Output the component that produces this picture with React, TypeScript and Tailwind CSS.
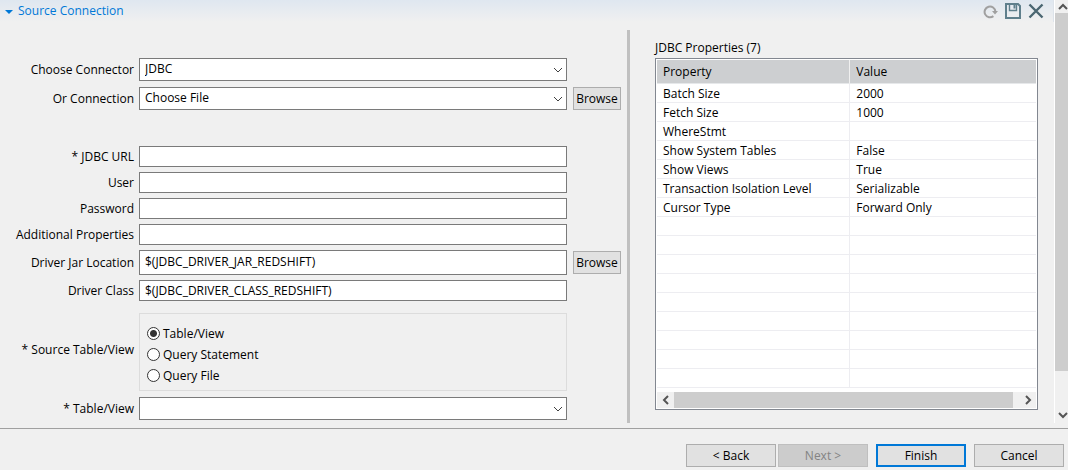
import { useId, useState } from 'react';
import type { ReactNode } from 'react';

const inputClass = 'block w-full border border-[#7a7a7a] bg-white px-[5px] outline-none';

function Chevron({ className, d }: { className: string; d: string }) {
  return (
    <svg className={className} viewBox="0 0 10 10" fill="none" stroke="currentColor" aria-hidden="true">
      <path d={d} />
    </svg>
  );
}

function Row({ label, htmlFor, action, children }: { label: string; htmlFor?: string; action?: ReactNode; children: ReactNode }) {
  return (
    <div className="grid grid-cols-[134px_minmax(0,1fr)_48px] items-center">
      <label htmlFor={htmlFor} className="text-right whitespace-nowrap">
        {label}
      </label>
      <div className="ml-[5px] mr-1.5">{children}</div>
      {action}
    </div>
  );
}

function TextField({ label, value = '', type = 'text', tall = false, action }: { label: string; value?: string; type?: string; tall?: boolean; action?: ReactNode }) {
  const id = useId();
  return (
    <Row label={label} htmlFor={id} action={action}>
      <input id={id} type={type} defaultValue={value} className={`${inputClass} ${tall ? 'h-[25px] pb-0.5' : 'h-[21px]'}`} />
    </Row>
  );
}

function SelectField({ label, options, action }: { label: string; options: string[]; action?: ReactNode }) {
  const id = useId();
  return (
    <Row label={label} htmlFor={id} action={action}>
      <div className="relative">
        <select id={id} className={`${inputClass} h-[23px] appearance-none pb-0.5`}>
          {options.map((o) => (
            <option key={o}>{o}</option>
          ))}
        </select>
        <Chevron className="pointer-events-none absolute top-[7px] right-1 size-[10px] text-[#404040]" d="M1 3L5 7L9 3" />
      </div>
    </Row>
  );
}

function Browse() {
  return (
    <button type="button" className="h-[23px] border border-[#adadad] bg-[#e1e1e1]">
      Browse
    </button>
  );
}

function SourceChoice() {
  const [choice, setChoice] = useState('Table/View');
  return (
    <div role="radiogroup" aria-labelledby="source-title" className="grid grid-cols-[134px_minmax(0,1fr)_48px] items-center">
      <span id="source-title" className="pb-1 text-right whitespace-nowrap">
        * Source Table/View
      </span>
      <div className="mr-1.5 ml-[5px] flex h-[78px] flex-col justify-end border border-[#dcdcdc] pb-1 pl-[7px]">
        {['Table/View', 'Query Statement', 'Query File'].map((name) => (
          <label key={name} className="flex h-[21px] items-center gap-[3px]">
            <input
              type="radio"
              name="source"
              checked={choice === name}
              onChange={() => setChoice(name)}
              className="size-[13px] appearance-none rounded-full border border-[#333] bg-white checked:bg-[radial-gradient(circle,#333_3px,#fff_4px)]"
            />
            {name}
          </label>
        ))}
      </div>
    </div>
  );
}

const properties: [string, string][] = [
  ['Batch Size', '2000'],
  ['Fetch Size', '1000'],
  ['WhereStmt', ''],
  ['Show System Tables', 'False'],
  ['Show Views', 'True'],
  ['Transaction Isolation Level', 'Serializable'],
  ['Cursor Type', 'Forward Only'],
];
const emptyRows: [string, string][] = Array.from({ length: 9 }, () => ['', '']);

function PropertiesTable() {
  return (
    <div className="border border-[#828790] bg-white p-px">
      <table aria-labelledby="properties-title" className="w-full table-fixed border-separate border-spacing-0 text-left">
        <thead>
          <tr className="h-6 bg-[#cdcfd1]">
            <th className="w-[51%] border-r border-b border-r-[#f0f0f0] border-b-[#e6e8ea] p-0 pl-1.5 font-normal">Property</th>
            <th className="border-b border-[#e6e8ea] p-0 pl-1.5 font-normal">Value</th>
          </tr>
        </thead>
        <tbody>
          {[...properties, ...emptyRows].map(([name, value], i) => (
            <tr key={i} className="h-[19px]">
              <td className="border-r border-b border-[#ededf1] p-0 pt-0.5 pl-1.5">{name}</td>
              <td className="border-b border-[#ededf1] p-0 pt-0.5 pl-1.5">{value}</td>
            </tr>
          ))}
        </tbody>
      </table>
      <div className="mt-1 flex h-4 items-stretch bg-[#f0f0f0] text-[#555]">
        <button type="button" aria-label="Scroll left" className="flex w-[17px] items-center justify-center">
          <Chevron className="size-[10px] stroke-2" d="M7 1L3 5L7 9" />
        </button>
        <div className="mr-1.5 flex-1 bg-[#cdcdcd]" />
        <button type="button" aria-label="Scroll right" className="flex w-[17px] items-center justify-center">
          <Chevron className="size-[10px] stroke-2" d="M3 1L7 5L3 9" />
        </button>
      </div>
    </div>
  );
}

function Header() {
  return (
    <header className="flex h-[22px] items-center border-r border-[#dde3ea] bg-linear-to-b from-[#dfe7f0] to-[#f0f0f0] pr-[9px] pl-[5px]">
      <button type="button" className="flex items-center gap-[5px] text-[#0078d7]">
        <svg className="h-2 w-2" viewBox="0 0 8 8" fill="currentColor" aria-hidden="true">
          <path d="M0 3H8L4 7Z" />
        </svg>
        Source Connection
      </button>
      <div className="ml-auto flex items-center gap-[7px]">
        <button type="button" aria-label="Refresh">
          <svg className="size-[15px]" viewBox="0 0 15 15" fill="none" stroke="#a0a0a0" strokeWidth="2" aria-hidden="true">
            <path d="M10.4 12.1A5.4 5.4 0 1 1 12.4 7.5" />
            <path d="M9 7H15L12 10.5Z" fill="#a0a0a0" stroke="none" />
          </svg>
        </button>
        <button type="button" aria-label="Save">
          <svg className="size-4" viewBox="0 0 16 16" fill="none" stroke="#5f7f8c" aria-hidden="true">
            <path d="M1 1H13L15 3V15H1Z" strokeWidth="2" />
            <path d="M4.5 1V7.5H11.5V1" strokeWidth="1.4" />
            <path d="M9.5 2V5.5" strokeWidth="2" />
          </svg>
        </button>
        <button type="button" aria-label="Close">
          <svg className="size-4" viewBox="0 0 16 16" fill="none" stroke="#4a6672" strokeWidth="2.4" aria-hidden="true">
            <path d="M1.5 1.5L14.5 14.5M14.5 1.5L1.5 14.5" />
          </svg>
        </button>
      </div>
    </header>
  );
}

function PageScrollbar() {
  return (
    <div className="mb-[5px] flex w-[14px] flex-col border-l border-white bg-[#f0f0f0] text-[#555]">
      <button type="button" aria-label="Scroll up" className="flex h-[13px] items-center justify-center pl-[3px]">
        <Chevron className="size-[10px] stroke-2" d="M1 7L5 3L9 7" />
      </button>
      <div className="flex-1 bg-[#cdcdcd]" />
      <div className="h-9" />
      <button type="button" aria-label="Scroll down" className="flex h-4 items-center justify-center pl-[3px]">
        <Chevron className="size-[10px] stroke-2" d="M1 3L5 7L9 3" />
      </button>
    </div>
  );
}

export default function App() {
  const button = 'h-[23px] w-[90px] border';
  return (
    <div className="flex min-h-screen flex-col bg-[#f0f0f0] font-['Open_Sans',sans-serif] text-[12px] leading-4 text-black">
      <div className="flex">
        <div className="min-w-0 flex-1">
          <Header />
          <main className="flex pr-4 pb-[5px]">
            <form className="min-w-0 flex-[621_1_0%] pt-9 pb-[3px]">
              <div className="space-y-1.5">
                <SelectField label="Choose Connector" options={['JDBC']} />
                <SelectField label="Or Connection" options={['Choose File']} action={<Browse />} />
              </div>
              <div className="mt-9 space-y-[5px]">
                <TextField label="* JDBC URL" />
                <TextField label="User" />
                <TextField label="Password" type="password" />
                <TextField label="Additional Properties" />
                <TextField label="Driver Jar Location" value="$(JDBC_DRIVER_JAR_REDSHIFT)" tall action={<Browse />} />
                <TextField label="Driver Class" value="$(JDBC_DRIVER_CLASS_REDSHIFT)" />
              </div>
              <div className="mt-3 space-y-1.5">
                <SourceChoice />
                <SelectField label="* Table/View" options={['']} />
              </div>
            </form>
            <div className="mt-2 mr-[25px] ml-1.5 w-[3px] bg-[#c0c0c0]" />
            <section className="min-w-0 flex-[383_1_0%] pt-[18px]">
              <h2 id="properties-title" className="mb-0.5">
                JDBC Properties (7)
              </h2>
              <PropertiesTable />
            </section>
          </main>
        </div>
        <PageScrollbar />
      </div>
      <footer className="flex justify-end border-t border-[#a0a0a0] pt-[15px] pr-1 pb-[3px]">
        <button type="button" className={`${button} mr-0.5 border-[#adadad] bg-[#e1e1e1]`}>
          &lt; Back
        </button>
        <button type="button" disabled className={`${button} mr-2 border-[#bfbfbf] bg-[#cccccc] text-[#838383]`}>
          Next &gt;
        </button>
        <button type="button" className="mr-2 h-[23px] w-[90px] border-2 border-[#0078d7] bg-[#e1e1e1]">
          Finish
        </button>
        <button type="button" className={`${button} border-[#adadad] bg-[#e1e1e1]`}>
          Cancel
        </button>
      </footer>
    </div>
  );
}
